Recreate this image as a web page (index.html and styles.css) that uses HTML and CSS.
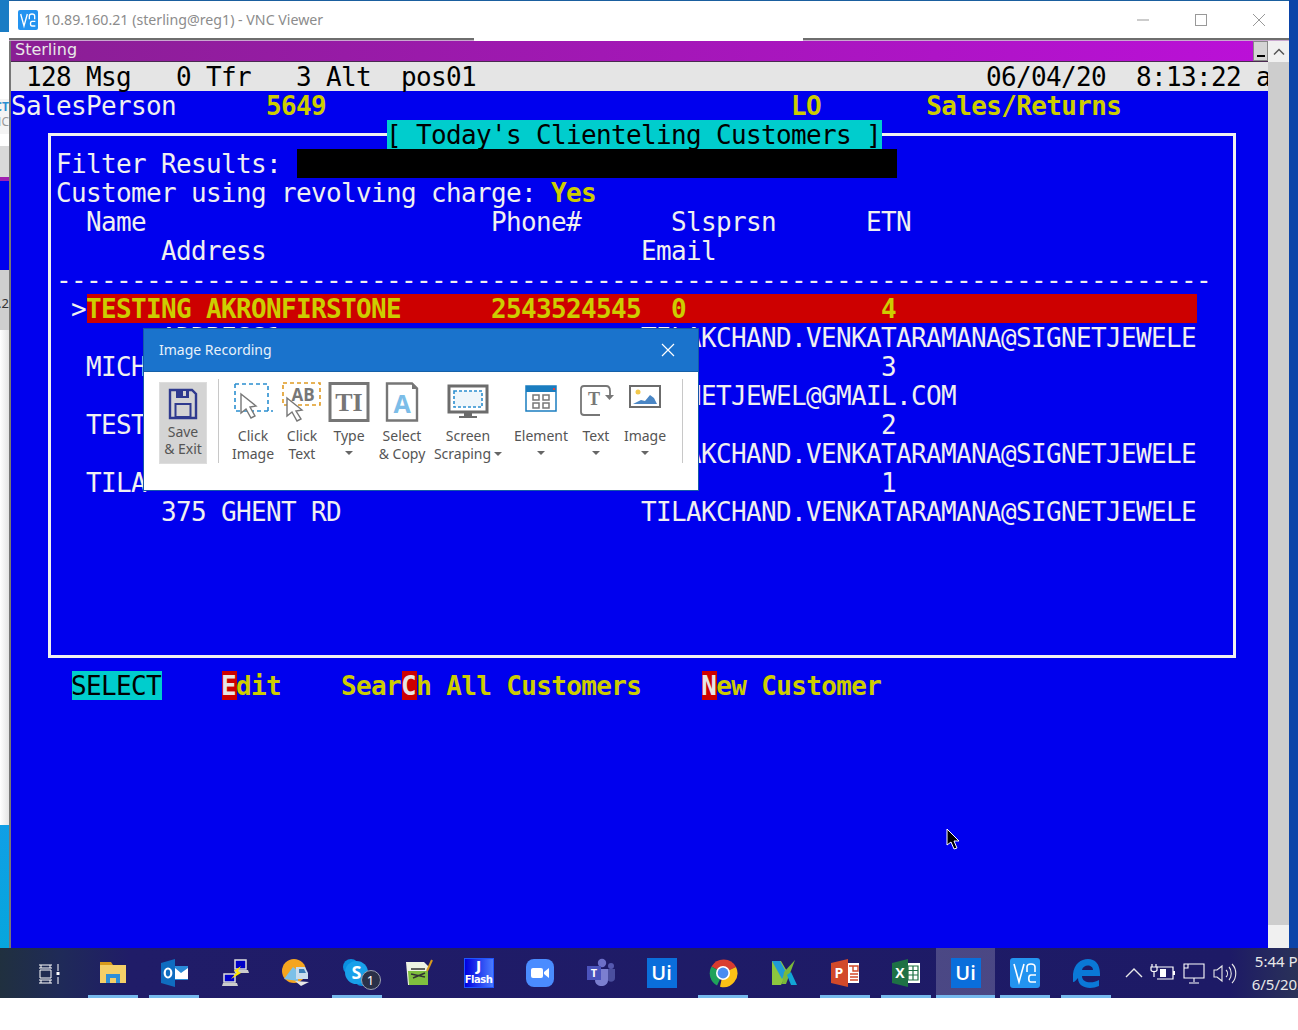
FILE: index.html
```html
<!DOCTYPE html>
<html lang="en">
<head>
  <meta charset="UTF-8">
  <title>10.89.160.21 (sterling@reg1) - VNC Viewer</title>
  <link rel="stylesheet" href="styles.css">
</head>
<body>
<div class="page">
  <div class="desk">
    <!-- sliver of the desktop behind the window -->
    <div class="strip-left">
      <div class="sl-blue"></div>
      <div class="sl-white"></div>
      <div class="sl-logo"><span class="sl-ct">CT</span><span class="sl-nc">NC</span></div>
      <div class="sl-white2"></div>
      <div class="sl-gray"></div>
      <div class="sl-purple"></div>
      <div class="sl-term"></div>
      <div class="sl-gray2">0.2</div>
      <div class="sl-page"></div>
      <div class="sl-cyan"></div>
    </div>

    <div class="win">
      <div class="titlebar">
        <svg class="vnc-small" viewBox="0 0 30 30"><rect width="30" height="30" rx="3" fill="#2393f0"/><path d="M4 6l5 18 5-18M17 14V9c0-4 8-4 8 0v5M26 17h-5c-3 0-3 7 0 7h5" fill="none" stroke="#fff" stroke-width="2"/></svg>
        <span class="win-title">10.89.160.21 (sterling@reg1) - VNC Viewer</span>
        <div class="win-btns">
          <svg viewBox="0 0 14 14"><path d="M1 7h12" stroke="#999" stroke-width="1"/></svg>
          <svg viewBox="0 0 14 14"><rect x="1.5" y="1.5" width="11" height="11" fill="none" stroke="#999"/></svg>
          <svg viewBox="0 0 14 14"><path d="M1 1l12 12M13 1L1 13" stroke="#999" stroke-width="1"/></svg>
        </div>
      </div>
      <div class="frame-top">
        <div class="ft-side ft-a"></div>
        <div class="ft-mid"></div>
        <div class="ft-side ft-b"></div>
      </div>

      <div class="win-body">
        <div class="term-col">
          <div class="appbar">
            <span class="app-name">Sterling</span>
            <span class="min-btn"><i></i></span>
          </div>
          <div class="screen">
            <div class="box"></div>
            <div class="row status"> 128 Msg   0 Tfr   3 Alt  pos01                                  06/04/20  8:13:22 am</div>
            <div class="row">SalesPerson      <b>5649</b>                               <b>LO</b>       <b>Sales/Returns</b></div>
            <div class="row">                         <span class="title">[ Today's Clienteling Customers ]</span></div>
            <div class="row">   Filter Results: <span class="input">                                        </span></div>
            <div class="row">   Customer using revolving charge: <b>Yes</b></div>
            <div class="row">     Name                       Phone#      Slsprsn      ETN</div>
            <div class="row">          Address                         Email</div>
            <div class="row">   -----------------------------------------------------------------------------</div>
            <div class="row">    &gt;<span class="sel"><b>TESTING AKRONFIRSTONE      2543524545  0             4                    </b></span></div>
            <div class="row">          ADDRESS1                        TILAKCHAND.VENKATARAMANA@SIGNETJEWELE</div>
            <div class="row">     MICHELLE                                             3</div>
            <div class="row">          1555555                         SIGNETJEWEL@GMAIL.COM</div>
            <div class="row">     TESTING                                              2</div>
            <div class="row">          1555555                         TILAKCHAND.VENKATARAMANA@SIGNETJEWELE</div>
            <div class="row">     TILA                                                 1</div>
            <div class="row">          375 GHENT RD                    TILAKCHAND.VENKATARAMANA@SIGNETJEWELE</div>
            <div class="row"> </div>
            <div class="row"> </div>
            <div class="row"> </div>
            <div class="row"> </div>
            <div class="row"> </div>
            <div class="row">    <span class="hl">SELECT</span>    <b><span class="key">E</span>dit</b>    <b>Sear<span class="key">C</span>h All Customers</b>    <b><span class="key">N</span>ew Customer</b></div>
          </div>
        </div>
        <div class="scrollbar">
          <div class="sb-arrow"><svg viewBox="0 0 12 8"><path d="M1 6.5l5-5 5 5" fill="none" stroke="#555" stroke-width="1.5"/></svg></div>
          <div class="sb-thumb"></div>
          <div class="sb-rest"></div>
        </div>
      </div>
    </div>

    <div class="strip-right"></div>
  </div>

  <div class="taskbar">
    <div class="taskview">
      <svg class="ico" viewBox="0 0 30 30"><path d="M4 6h13M6 6v3M15 6v3M4 9h13M5 11h11v8H5zM4 21h13M4 24h13M6 21v3M15 21v3M23 5v7M23 18v7" fill="none" stroke="#fff" stroke-width="1"/><rect x="21.5" y="13" width="3" height="3" fill="#fff"/></svg>
    </div>
    <div class="slot open">
      <svg class="ico" viewBox="0 0 30 30"><path d="M2 4h11l2 3H2z" fill="#d89a1c"/><path d="M2 7h26v18H2z" fill="#f5cf68"/><path d="M8 25v-9h14v9h-4v-5h-6v5z" fill="#2f8fd8"/></svg>
    </div>
    <div class="slot open">
      <svg class="ico" viewBox="0 0 30 30"><path d="M2 5l14-4v28L2 25z" fill="#0f6cc0"/><rect x="16" y="8" width="13" height="14" fill="#2a8ad8"/><path d="M16 10l6 5 7-5v11H16z" fill="#fff"/><ellipse cx="9" cy="15" rx="3.3" ry="4.5" fill="none" stroke="#fff" stroke-width="2.2"/></svg>
    </div>
    <div class="slot">
      <svg class="ico" viewBox="0 0 30 30"><rect x="15" y="2" width="11" height="9" fill="#0000c8" stroke="#ddd" stroke-width="1.5"/><path d="M14 12h14l1 3H15z" fill="#ccc"/><rect x="4" y="16" width="11" height="8" fill="#0000c8" stroke="#ddd" stroke-width="1.5"/><path d="M3 25h14l1 3H2z" fill="#ccc"/><path d="M21 8l-7 5 3 1-6 7 10-6-3-2z" fill="#ffe600"/></svg>
    </div>
    <div class="slot">
      <svg class="ico" viewBox="0 0 30 30"><circle cx="13" cy="13" r="12" fill="#f5a51f"/><path d="M3 21l9-12 5 4v10z" fill="#7cc0e8"/><path d="M15 9h9l3 6v6H15z" fill="#c8dced"/><path d="M18 11h5l2 4h-7z" fill="#3c7fb8"/><path d="M14 23l14 1-8 4z" fill="#e8e8e8"/></svg>
    </div>
    <div class="slot open skype">
      <svg class="ico" viewBox="0 0 30 30"><circle cx="9" cy="9" r="8" fill="#0a8fe0"/><circle cx="20" cy="20" r="8" fill="#0a8fe0"/><circle cx="14.5" cy="14.5" r="11.5" fill="#18a0ea"/><text class="skype-s" x="14.5" y="21" text-anchor="middle">S</text></svg>
      <span class="badge">1</span>
    </div>
    <div class="slot">
      <svg class="ico" viewBox="0 0 30 30"><path d="M3 4h18l4 4v19H5z" fill="#eef2e4"/><path d="M5 13h20v14H6z" fill="#7fbf3f"/><path d="M8 11h14M8 16l14 3M10 20l12-5" stroke="#333" stroke-width="1.4"/><path d="M24 13l5-11" stroke="#d89a1c" stroke-width="2"/></svg>
    </div>
    <div class="slot">
      <div class="flash"><span class="flash-j">J</span><span class="flash-t">Flash</span></div>
    </div>
    <div class="slot">
      <svg class="ico" viewBox="0 0 30 30"><rect x="1" y="1" width="28" height="28" rx="8" fill="#4a8cff"/><rect x="6" y="10" width="12" height="10" rx="2" fill="#fff"/><path d="M19 14l5-4v10l-5-4z" fill="#fff"/></svg>
    </div>
    <div class="slot">
      <svg class="ico" viewBox="0 0 30 30"><circle cx="16" cy="5" r="4.2" fill="#6d6fc8"/><circle cx="25" cy="8" r="3" fill="#5558af"/><path d="M21 11h8v9c0 5-8 5-8 0z" fill="#4b4f9e"/><path d="M9 11h13v11c0 8-13 8-13 0z" fill="#7b7fd0"/><rect x="1" y="8" width="14" height="14" fill="#4b53bc"/><text class="teams-t" x="8" y="19" text-anchor="middle">T</text></svg>
    </div>
    <div class="slot"><div class="ui-tile">Ui</div></div>
    <div class="slot open">
      <svg class="ico" viewBox="0 0 30 30"><path d="M15 15L3.5 8.5A14 14 0 0 1 28 9z" fill="#d93c2f"/><path d="M15 15L9 27.5A14 14 0 0 1 3.5 8.5z" fill="#1fa25a"/><path d="M15 15l13-6A14 14 0 0 1 12 28.7z" fill="#fbc116"/><circle cx="15" cy="15" r="7" fill="#fff"/><circle cx="15" cy="15" r="5.4" fill="#4a8cf0"/></svg>
    </div>
    <div class="slot">
      <svg class="ico" viewBox="0 0 30 30"><path d="M3 3h9l7 12-7 12H3z" fill="#8cc63f"/><path d="M3 3h8l6 11-4 7z" fill="#1f9ad6"/><path d="M15 14L26 2l-9 24h-4z" fill="#7ab83a"/><path d="M18 17l4-3 6 13h-6z" fill="#12a5d6"/></svg>
    </div>
    <div class="slot open">
      <svg class="ico" viewBox="0 0 30 30"><rect x="15" y="5" width="14" height="20" fill="#fff"/><path d="M1 5l17-4v28L1 25z" fill="#d2492a"/><path d="M19 8h4v5h5v-5h-5zM20 16h8M20 19h8M20 22h8" fill="none" stroke="#d2492a" stroke-width="1.4"/><text class="office-l" x="9" y="20" text-anchor="middle">P</text></svg>
    </div>
    <div class="slot open">
      <svg class="ico" viewBox="0 0 30 30"><rect x="15" y="5" width="14" height="20" fill="#fff"/><path d="M17 8h10v14H17zM22 8v14M17 12.5h10M17 17h10" fill="none" stroke="#1e7145" stroke-width="1.2"/><path d="M1 5l16-4v28L1 25z" fill="#1e7145"/><text class="office-l" x="9" y="20" text-anchor="middle">X</text></svg>
    </div>
    <div class="slot open active"><div class="ui-tile">Ui</div></div>
    <div class="slot open">
      <svg class="ico" viewBox="0 0 30 30"><rect width="30" height="30" rx="3" fill="#2393f0"/><path d="M4 6l5 18 5-18M17 14V9c0-4 8-4 8 0v5M26 17h-5c-3 0-3 7 0 7h5" fill="none" stroke="#fff" stroke-width="1.6"/></svg>
    </div>
    <div class="slot open">
      <svg class="ico" viewBox="0 0 30 30"><path d="M2 16C3 6 10 1 17 1c7 0 12 5 12 15v2H11c0 7 10 8 17 4v6c-9 4-21 2-21-8-2 2-3 4-5 4 0-2 0-3 0-8zM11 12h11c0-6-10-6-11 0z" fill="#0a78d7"/></svg>
    </div>
    <div class="tray">
      <svg class="ico" viewBox="0 0 30 30"><path d="M7 19l8-8 8 8" fill="none" stroke="#e8e8e8" stroke-width="1.4"/></svg>
      <svg class="ico" viewBox="0 0 30 30"><path d="M8 9h16v12H8" fill="none" stroke="#fff" stroke-width="1.2"/><rect x="11" y="11" width="6" height="8" fill="#fff"/><rect x="24" y="13" width="2" height="4" fill="#fff"/><path d="M3 6v3M7 6v3M2 9h6v3c0 2-6 2-6 0zM5 14v5" fill="none" stroke="#fff" stroke-width="1.2"/></svg>
      <svg class="ico" viewBox="0 0 30 30"><path d="M5 6h20v14H5zM15 20v4M10 25h10M5 6v4h4V6" fill="none" stroke="#fff" stroke-width="1.1"/></svg>
      <svg class="ico" viewBox="0 0 30 30"><path d="M5 12h3l5-4v15l-5-4H5zM17 12c2 2 2 5 0 7M20 9c3 3 3 10 0 13M23 6c5 5 5 14 0 19" fill="none" stroke="#e8e8e8" stroke-width="1.1"/></svg>
      <div class="clock"><span>5:44 PM</span><span>6/5/2020</span></div>
    </div>
  </div>

  <!-- recorder toolbar floating above the terminal -->
  <div class="dialog">
    <div class="dlg-head">
      <span>Image Recording</span>
      <svg class="dlg-close" viewBox="0 0 14 14"><path d="M1 1l12 12M13 1L1 13" stroke="#fff" stroke-width="1.2"/></svg>
    </div>
    <div class="dlg-body">
      <div class="save-tile">
        <svg class="save-ico" viewBox="0 0 30 32"><path d="M2 2h22l4 4v24H2z" fill="none" stroke="#2f3a8f" stroke-width="2.4"/><rect x="8" y="2" width="13" height="8" fill="#2f3a8f"/><rect x="15" y="3" width="3" height="5" fill="#d4d4d4"/><rect x="7.500" y="16" width="15" height="13" fill="none" stroke="#2f3a8f" stroke-width="2"/></svg>
        <span>Save</span>
        <span>&amp; Exit</span>
      </div>
      <div class="sep"></div>
      <div class="tools">
        <div class="tool">
          <svg class="t-ico" viewBox="0 0 42 40"><path d="M3 2h33v27" fill="none" stroke="#2b8fd0" stroke-width="1.6" stroke-dasharray="4 3"/><path d="M3 2v27h38" fill="none" stroke="#2b8fd0" stroke-width="1.6" stroke-dasharray="4 3"/><path d="M9 12l15 12-6 1 5 9-4 2-5-9-5 4z" fill="#fff" stroke="#777" stroke-width="1.4"/></svg>
          <span>Click</span><span>Image</span>
        </div>
        <div class="tool">
          <svg class="t-ico" viewBox="0 0 42 40"><rect x="2" y="1" width="37" height="22" fill="none" stroke="#e09a22" stroke-width="1.6" stroke-dasharray="4 3"/><text class="ab" x="22" y="19" text-anchor="middle">AB</text><path d="M6 16l15 12-6 1 5 8-4 2-5-9-5 4z" fill="#fff" stroke="#777" stroke-width="1.4"/></svg>
          <span>Click</span><span>Text</span>
        </div>
        <div class="tool">
          <svg class="t-ico" viewBox="0 0 42 40"><rect x="2" y="1.500" width="38" height="37" fill="none" stroke="#767676" stroke-width="3"/><text class="ti" x="21" y="29" text-anchor="middle">TI</text></svg>
          <span>Type</span><i class="caret"></i>
        </div>
        <div class="tool">
          <svg class="t-ico" viewBox="0 0 42 40"><path d="M6 1.500h25l5 5v32H6z" fill="none" stroke="#767676" stroke-width="2.4"/><path d="M31 2v5h5z" fill="#767676"/><text class="doc-a" x="21" y="31" text-anchor="middle">A</text></svg>
          <span>Select</span><span>&amp; Copy</span>
        </div>
        <div class="tool">
          <svg class="t-ico" viewBox="0 0 42 40"><rect x="2" y="4" width="38" height="26" fill="#fff" stroke="#6c6c6c" stroke-width="3"/><rect x="7" y="9" width="28" height="16" fill="#eef6fb" stroke="#2b8fd0" stroke-width="1.6" stroke-dasharray="3 2"/><path d="M17 30h8v4h5v2H12v-2h5z" fill="#6c6c6c"/></svg>
          <span>Screen</span><span>Scraping<i class="caret inline"></i></span>
        </div>
        <div class="tool">
          <svg class="t-ico" viewBox="0 0 42 40"><rect x="6" y="4" width="30" height="25" fill="#fff" stroke="#1a7dc0" stroke-width="1.500"/><rect x="6" y="4" width="30" height="6" fill="#1a7dc0"/><rect x="33" y="6" width="2" height="2" fill="#e04040"/><path d="M13 13h6v5h-6zM23 13h6v5h-6zM13 21h6v5h-6zM23 21h6v5h-6z" fill="none" stroke="#777" stroke-width="1.500"/></svg>
          <span>Element</span><i class="caret"></i>
        </div>
        <div class="tool">
          <svg class="t-ico" viewBox="0 0 42 40"><path d="M26 4H9a3 3 0 0 0-3 3v23a3 3 0 0 0 3 3h16" fill="none" stroke="#777" stroke-width="1.800"/><path d="M26 4h5c3 0 4 2 4 5v5" fill="none" stroke="#777" stroke-width="1.800"/><path d="M30 13h9l-4.500 5z" fill="#777"/><text class="ti-small" x="19" y="23" text-anchor="middle">T</text></svg>
          <span>Text</span><i class="caret"></i>
        </div>
        <div class="tool">
          <svg class="t-ico" viewBox="0 0 42 40"><rect x="6" y="4" width="30" height="21" fill="#fff" stroke="#6c6c6c" stroke-width="2"/><circle cx="14" cy="10" r="2.500" fill="#f2c84b"/><path d="M9 22l8-4 4 1 5-6 4 3 3 6z" fill="#4a86c5"/></svg>
          <span>Image</span><i class="caret"></i>
        </div>
      </div>
      <div class="sep sep-end"></div>
    </div>
  </div>

  <svg class="pointer" viewBox="0 0 14 22"><path d="M1 1v16l4-3 3 7 3-1-3-7h5z" fill="#000" stroke="#fff" stroke-width="1"/></svg>
</div>
</body>
</html>
```

FILE: styles.css
```css
body {
  margin: 0;
  background-color: #ffffff;
  font-family: "Noto Sans", Arial, sans-serif;
}
.page {
  position: relative;
  width: 1298px;
  height: 1030px;
  overflow: hidden;
  background-color: #ffffff;
}
.desk {
  display: flex;
  height: 948px;
}

/* desktop behind the window */
.strip-left {
  width: 9px;
  display: flex;
  flex-direction: column;
  overflow: hidden;
}
.sl-blue { height: 32px; background-color: #1a7cc4; }
.sl-white { height: 67px; background-color: #ffffff; }
.sl-logo {
  height: 35px;
  display: flex;
  flex-direction: column;
  align-items: flex-end;
  font-size: 12px;
  line-height: 15px;
  background-color: #f4f4f4;
}
.sl-ct { color: #2b8fd0; font-weight: bold; }
.sl-nc { color: #999999; }
.sl-white2 { height: 12px; background-color: #ffffff; }
.sl-gray { height: 31px; background-color: #d9d9d9; }
.sl-purple { height: 4px; background-color: #a020b0; }
.sl-term { height: 89px; background-color: #0000ee; }
.sl-gray2 {
  height: 60px;
  display: flex;
  justify-content: flex-end;
  background-color: #cfcfcf;
  font-size: 13px;
  line-height: 66px;
  color: #333333;
  white-space: nowrap;
}
.sl-page { height: 495px; background: linear-gradient(to right, #ffffff, #e4e4e4); }
.sl-cyan { height: 123px; background: linear-gradient(#0f9fe6, #06a6dd); }
.strip-right {
  width: 9px;
  background-color: #0b44a8;
}

/* VNC window */
.win {
  width: 1280px;
  display: flex;
  flex-direction: column;
  background-color: #ffffff;
  border-top: 1px solid #1a5f9f;
  box-sizing: border-box;
}
.titlebar {
  display: flex;
  align-items: center;
  height: 37px;
  flex-shrink: 0;
  padding-left: 9px;
}
.vnc-small {
  width: 20px;
  height: 20px;
  margin-top: 1px;
}
.win-title {
  margin-left: 6px;
  font-size: 14.2px;
  color: #8c8c8c;
}
.win-btns {
  margin-left: auto;
  display: flex;
  gap: 44px;
  padding-right: 23px;
}
.win-btns svg {
  width: 14px;
  height: 14px;
}
.frame-top {
  display: flex;
  height: 3px;
  flex-shrink: 0;
}
.ft-side {
  background-color: #6e6e6e;
  border-bottom: 1px solid #c9a8cf;
  box-sizing: border-box;
}
.ft-a { width: 465px; }
.ft-mid { width: 329px; }
.ft-b { flex: 1; }
.win-body {
  flex: 1;
  display: flex;
  min-height: 0;
}
.term-col {
  width: 1259px;
  padding-left: 2px;
  box-sizing: border-box;
  background-color: #777777;
  display: flex;
  flex-direction: column;
}
.appbar {
  display: flex;
  align-items: center;
  height: 21px;
  flex-shrink: 0;
  background: linear-gradient(to right, #8a1f94, #bb10d8);
  border-bottom: 1px solid #4a2a50;
  box-sizing: border-box;
}
.app-name {
  margin: -3px 0 0 4px;
  font-family: "DejaVu Sans", sans-serif;
  font-size: 16px;
  color: #e8e8e8;
}
.min-btn {
  margin-left: auto;
  width: 15px;
  height: 20px;
  background-color: #d4d4d4;
  border: 1px solid #888888;
  box-sizing: border-box;
  display: flex;
  align-items: flex-end;
  justify-content: center;
  padding-bottom: 3px;
}
.min-btn i {
  width: 8px;
  height: 2px;
  background-color: #000000;
}

/* terminal text grid, 15x29 cells */
.screen {
  position: relative;
  flex: 1;
  background-color: #0000ee;
  overflow: hidden;
  font-family: "DejaVu Sans Mono", "Liberation Mono", monospace;
  font-size: 26px;
  letter-spacing: -0.652px;
  color: #f0f0f0;
}
.row {
  height: 29px;
  line-height: 31px;
  white-space: pre;
}
.row b {
  color: #cdcd00;
  font-weight: bold;
}
.status {
  background-color: #e5e5e5;
  color: #000000;
}
.box {
  position: absolute;
  left: 37px;
  top: 71px;
  width: 1188px;
  height: 525px;
  border: 3px solid #f0f0f0;
  box-sizing: border-box;
}
/* coloured cells: background stays on the grid, glyph sits 1px left in it */
.title, .input, .sel, .hl, .key {
  display: inline-block;
  height: 29px;
  vertical-align: top;
  margin: 0 -1px 0 1px;
  padding-right: 1px;
  text-indent: -1px;
}
.title {
  position: relative;
  background-color: #00cdcd;
  color: #000000;
}
.input { background-color: #000000; }
.sel { background-color: #cd0000; }
.hl {
  background-color: #00cdcd;
  color: #000000;
}
.key {
  background-color: #cd0000;
  color: #e5e5e5;
}
.scrollbar {
  width: 21px;
  display: flex;
  flex-direction: column;
  background-color: #f0f0f0;
}
.sb-arrow {
  height: 21px;
  display: flex;
  align-items: center;
  justify-content: center;
}
.sb-arrow svg {
  width: 12px;
  height: 8px;
}
.sb-thumb {
  height: 863px;
  background-color: #cdcdcd;
}
.sb-rest { flex: 1; }

/* taskbar */
.taskbar {
  display: flex;
  height: 50px;
  padding-left: 17px;
  box-sizing: border-box;
  background: linear-gradient(to right, #20303f 0, #1f2a58 60px, #201c68 130px, #1d1a66 1230px, #2a3258 1298px);
}
.ico {
  width: 30px;
  height: 30px;
  flex-shrink: 0;
}
.taskview {
  width: 65px;
  flex-shrink: 0;
  display: flex;
  align-items: center;
  justify-content: center;
  padding-top: 1px;
}
.slot {
  position: relative;
  width: 50px;
  flex-shrink: 0;
  margin: 0 5.5px;
  box-sizing: border-box;
  border-bottom: 3px solid transparent;
  padding-top: 3px;
  display: flex;
  align-items: center;
  justify-content: center;
}
.slot.open { border-bottom-color: #76b9ed; }
.slot.active {
  width: 59px;
  margin: 0 -1px 0 0;
  background-color: rgba(255, 255, 255, 0.2);
}
.badge {
  position: absolute;
  left: 29px;
  top: 22px;
  width: 20px;
  height: 20px;
  box-sizing: border-box;
  border: 1px solid #9aa0b0;
  border-radius: 50%;
  background-color: #2a3048;
  color: #ffffff;
  font-size: 13px;
  line-height: 18px;
  text-align: center;
}
.skype-s {
  font-family: "Open Sans", sans-serif;
  font-size: 18px;
  font-weight: bold;
  fill: #ffffff;
}
.teams-t {
  font-family: "Open Sans", sans-serif;
  font-size: 11px;
  font-weight: bold;
  fill: #ffffff;
}
.office-l {
  font-family: "Open Sans", sans-serif;
  font-size: 14px;
  font-weight: bold;
  fill: #ffffff;
}
.flash {
  width: 30px;
  height: 30px;
  box-sizing: border-box;
  border: 1px solid #1f55ff;
  background: linear-gradient(to right, #0000e0, #4a7cff);
  color: #ffffff;
  font-family: "DejaVu Sans", sans-serif;
  font-weight: bold;
  text-align: center;
  display: flex;
  flex-direction: column;
}
.flash-j {
  font-size: 14px;
  line-height: 15px;
}
.flash-t {
  font-size: 10px;
  line-height: 12px;
  letter-spacing: -0.5px;
}
.ui-tile {
  width: 30px;
  height: 30px;
  background-color: #0a6edb;
  color: #ffffff;
  font-family: "Open Sans", sans-serif;
  font-size: 20px;
  font-weight: 600;
  line-height: 30px;
  text-align: center;
}
.tray {
  display: flex;
  flex-shrink: 0;
  align-items: center;
  margin-left: 3px;
}
.clock {
  width: 80px;
  margin-left: 4px;
  flex-shrink: 0;
  display: flex;
  flex-direction: column;
  gap: 4px;
  align-items: center;
  font-size: 15px;
  line-height: 19px;
  color: #e8e8e8;
  white-space: nowrap;
}

/* image recording dialog */
.dialog {
  position: absolute;
  left: 144px;
  top: 329px;
  width: 554px;
  height: 161px;
  display: flex;
  flex-direction: column;
  background-color: #ffffff;
  box-shadow: 0 0 0 1px #1558a8;
}
.dlg-head {
  display: flex;
  align-items: center;
  justify-content: space-between;
  height: 43px;
  flex-shrink: 0;
  padding: 0 23px 1px 15px;
  box-sizing: border-box;
  background-color: #1a73cc;
  border-bottom: 1px solid #1560a8;
  color: #e8f1fa;
  font-size: 14px;
}
.dlg-close {
  width: 14px;
  height: 14px;
}
.dlg-body {
  display: flex;
  padding: 10px 0 0 15px;
  font-size: 14px;
  color: #555555;
}
.save-tile {
  width: 48px;
  height: 82px;
  box-sizing: border-box;
  padding-top: 5px;
  background-color: #d4d4d4;
  border: 1px solid #dddddd;
  display: flex;
  flex-direction: column;
  align-items: center;
  line-height: 17px;
}
.save-ico {
  width: 30px;
  height: 32px;
  margin-bottom: 3px;
}
.sep {
  width: 1px;
  height: 84px;
  margin: -3px 0 0 11px;
  background-color: #c8c8c8;
}
.tools {
  display: grid;
  grid-template-columns: 54px 44px 50px 56px 76px 70px 40px 58px;
  margin-left: 7px;
}
.sep-end { margin-left: 8px; }
.tool {
  display: flex;
  flex-direction: column;
  align-items: center;
  line-height: 18px;
  white-space: nowrap;
}
.t-ico {
  width: 42px;
  height: 40px;
  margin-bottom: 5px;
}
.caret {
  display: block;
  width: 0;
  height: 0;
  margin-top: 6px;
  border-left: 4px solid transparent;
  border-right: 4px solid transparent;
  border-top: 4px solid #666666;
}
.caret.inline {
  display: inline-block;
  margin: 0 0 2px 3px;
  vertical-align: middle;
}
.ab {
  font-family: "Open Sans", sans-serif;
  font-size: 17px;
  font-weight: bold;
  fill: #777777;
}
.ti {
  font-family: "Liberation Serif", serif;
  font-size: 26px;
  font-weight: bold;
  fill: #767676;
}
.ti-small {
  font-family: "Liberation Serif", serif;
  font-size: 18px;
  font-weight: bold;
  fill: #777777;
}
.doc-a {
  font-family: "Open Sans", sans-serif;
  font-size: 25px;
  font-weight: bold;
  fill: #7cbde8;
}
.pointer {
  position: absolute;
  left: 946px;
  top: 828px;
  width: 14px;
  height: 22px;
}
```
